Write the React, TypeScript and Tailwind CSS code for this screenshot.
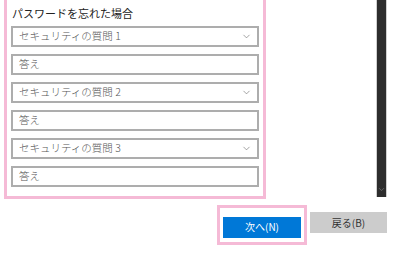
import { ChevronDown } from "lucide-react";

const font = { fontFamily: '"Noto Sans CJK JP", "Noto Sans", sans-serif' };

function Select({ label }: { label: string }) {
  return (
    <div className="h-[21px] border-2 border-[#adadad] bg-white flex items-center pl-[6px] pr-[5px]">
      <span className="text-[10.5px] text-[#555] font-light leading-none flex-1">{label}</span>
      <ChevronDown size={11} strokeWidth={1.3} className="text-[#666]" />
    </div>
  );
}

function Answer() {
  return (
    <div className="h-[21px] border-2 border-[#adadad] bg-white flex items-center pl-[6px]">
      <span className="text-[10.5px] text-[#555] font-light leading-none">答え</span>
    </div>
  );
}

export default function App() {
  return (
    <div className="w-[400px] h-[254px] bg-white overflow-hidden relative" style={font}>
      <div className="flex">
        <div className="ml-[4px] w-[262px] border-x-[3px] border-b-[3px] border-[#f5bad6] px-[4px] pb-[9px]">
          <div className="h-[26px] flex items-center text-[11px] text-[#222] pl-[1px]">パスワードを忘れた場合</div>
          <div className="flex flex-col gap-[7px]">
            <Select label="セキュリティの質問 1" />
            <Answer />
            <Select label="セキュリティの質問 2" />
            <Answer />
            <Select label="セキュリティの質問 3" />
            <Answer />
          </div>
        </div>
        <div className="ml-[110px] w-[11px] h-[197px] bg-[#2d2d2d] border-x border-[#cfcfcf] flex flex-col justify-end items-center pb-[3px]">
          <ChevronDown size={9} strokeWidth={1.5} className="text-[#888]" />
        </div>
      </div>
      <div className="flex mt-[6px] ml-[217px] items-start">
        <div className="border-[3px] border-[#f5bad6] px-[3px] py-[4px]">
          <button className="w-[78px] h-[21px] bg-[#0078d7] text-white text-[10px] leading-none">次へ(N)</button>
        </div>
        <button className="ml-[3px] mt-[7px] w-[77px] h-[21px] bg-[#cccccc] text-[#333] text-[10px] leading-none">戻る(B)</button>
      </div>
    </div>
  );
}
